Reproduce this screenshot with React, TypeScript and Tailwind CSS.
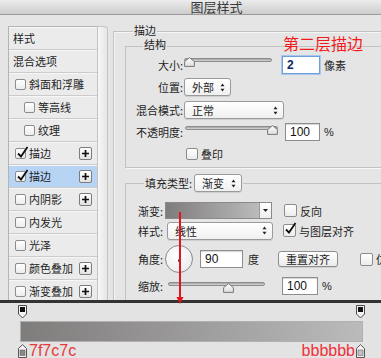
import React from 'react';

type ItemProps = {
  label: string;
  box?: boolean;
  checked?: boolean;
  indent?: boolean;
  plus?: boolean;
  active?: boolean;
};

function Check({ checked = false, className = '' }: { checked?: boolean; className?: string }) {
  return (
    <span
      className={`relative inline-block w-[11px] h-[11px] shrink-0 border border-[#8c8c8c] rounded-[2px] bg-gradient-to-b from-white to-[#ececec] ${className}`}
    >
      {checked && (
        <svg className="absolute -top-[3px] left-[0px] w-[13px] h-[13px]" viewBox="0 0 13 13" aria-hidden="true">
          <path d="M2 7.5 L5 10.5 L11.5 1" fill="none" stroke="#111" strokeWidth="1.8" />
        </svg>
      )}
    </span>
  );
}

function PlusBtn() {
  return (
    <span className="ml-auto mr-[5px] w-[13px] h-[13px] border border-[#7c7c7c] rounded-[2px] bg-gradient-to-b from-white to-[#e2e2e2] flex items-center justify-center">
      <svg viewBox="0 0 9 9" className="w-[9px] h-[9px]" aria-hidden="true">
        <path d="M4.5 1v7M1 4.5h7" stroke="#111" strokeWidth="1.7" />
      </svg>
    </span>
  );
}

function Item({ label, box, checked, indent, plus, active }: ItemProps) {
  return (
    <div
      className={`h-[23px] shrink-0 flex items-center border-b border-[#cbcbcb] shadow-[inset_0_1px_0_#f7f7f7] text-[11px] text-[#1e1e1e] ${
        active ? 'bg-[#b7d4f5]' : 'bg-[#ebebeb]'
      } ${indent ? 'pl-[15px]' : box ? 'pl-[6px]' : 'pl-[4px]'}`}
    >
      {box && <Check checked={checked} className="mr-[3px]" />}
      <span className="leading-[12px]">{label}</span>
      {plus && <PlusBtn />}
    </div>
  );
}

function Arrows() {
  return (
    <svg viewBox="0 0 5 9" className="w-[5px] h-[9px] shrink-0" aria-hidden="true">
      <path d="M2.5 0.5 L4.5 3.2 H0.5 Z M2.5 8.5 L4.5 5.8 H0.5 Z" fill="#222" />
    </svg>
  );
}

function Select({ text, className = '' }: { text: string; className?: string }) {
  return (
    <div
      className={`h-[18px] shrink-0 flex items-center justify-between pl-[7px] pr-[5px] border border-[#9a9a9a] rounded-[3px] bg-gradient-to-b from-white to-[#f0f0f0] shadow-[0_1px_0_#cfcfcf] text-[11px] leading-[12px] text-[#1e1e1e] ${className}`}
    >
      <span>{text}</span>
      <Arrows />
    </div>
  );
}

function Field({ value, className = '', focus = false }: { value: string; className?: string; focus?: boolean }) {
  return (
    <div
      className={`h-[18px] shrink-0 flex items-center pl-[4px] bg-white text-[12px] leading-[12px] font-['Liberation_Sans',sans-serif] ${
        focus
          ? 'border border-[#6f9fd8] shadow-[0_0_0_1px_#a9c8ef] text-[#102a5c] font-bold'
          : 'border border-[#8e8e8e] shadow-[inset_0_1px_1px_#d5d5d5] text-[#111]'
      } ${className}`}
    >
      {value}
    </div>
  );
}

function Thumb({ className = '' }: { className?: string }) {
  return (
    <svg viewBox="0 0 11 10" className={`absolute w-[11px] h-[10px] ${className}`} aria-hidden="true">
      <defs>
        <linearGradient id="tg" x1="0" y1="0" x2="0" y2="1">
          <stop offset="0" stopColor="#ffffff" />
          <stop offset="1" stopColor="#dcdcdc" />
        </linearGradient>
      </defs>
      <path d="M5.5 0.6 L10.4 4.6 V9.4 H0.6 V4.6 Z" fill="url(#tg)" stroke="#777" strokeWidth="1" />
    </svg>
  );
}

function Slider({ className = '', thumb = '', track = 'top-[3px]' }: { className?: string; thumb?: string; track?: string }) {
  return (
    <div className={`relative h-[18px] shrink-0 ${className}`}>
      <div className={`absolute left-0 right-0 h-[4px] rounded-full border border-[#8d8d8d] bg-gradient-to-b from-[#a2a2a2] to-[#d8d8d8] ${track}`} />
      <Thumb className={thumb} />
    </div>
  );
}

function Label({ children, className = '' }: { children: React.ReactNode; className?: string }) {
  return <span className={`shrink-0 text-right text-[11px] leading-[12px] text-[#1e1e1e] ${className}`}>{children}</span>;
}

function TopStop() {
  return (
    <svg viewBox="0 0 9 14" className="w-[9px] h-[14px]" aria-hidden="true">
      <path d="M0.5 0.5 H8.5 V9 L4.5 13 L0.5 9 Z" fill="#f4f4f4" stroke="#4a4a4a" />
      <rect x="2" y="2" width="5" height="5" fill="#111" />
    </svg>
  );
}

function BottomStop({ fill }: { fill: string }) {
  return (
    <svg viewBox="0 0 9 14" className="w-[9px] h-[14px] shrink-0" aria-hidden="true">
      <path d="M4.5 0.6 L8.5 4.5 V13.5 H0.5 V4.5 Z" fill="#f4f4f4" stroke="#555" />
      <rect x="2" y="6" width="5" height="5.5" fill={fill} stroke="#666" strokeWidth="0.6" />
    </svg>
  );
}

const items: ItemProps[] = [
  { label: '样式' },
  { label: '混合选项' },
  { label: '斜面和浮雕', box: true },
  { label: '等高线', box: true, indent: true },
  { label: '纹理', box: true, indent: true },
  { label: '描边', box: true, checked: true, plus: true },
  { label: '描边', box: true, checked: true, plus: true, active: true },
  { label: '内阴影', box: true, plus: true },
  { label: '内发光', box: true },
  { label: '光泽', box: true },
  { label: '颜色叠加', box: true, plus: true },
  { label: '渐变叠加', box: true, plus: true },
];

export default function App() {
  return (
    <div className="relative w-[381px] h-[358px] overflow-hidden bg-[#e5e5e5] font-['Noto_Sans_CJK_SC','Noto_Sans',sans-serif] text-[#1e1e1e]">
      {/* title bar */}
      <div className="h-[15px] overflow-hidden border-b border-[#9a9a9a] bg-gradient-to-b from-[#ececec] to-[#cdcdcd] flex justify-center pl-[52px]">
        <span className="text-[13px] leading-[13px] text-[#3a3a3a]">图层样式</span>
      </div>

      {/* body */}
      <div className="h-[285px] flex overflow-hidden">
        {/* style list */}
        <div className="w-[108px] shrink-0 pl-[8px] pt-[11px] flex">
          <div className="w-[89px] flex flex-col border-l border-t border-[#b4b4b4]">
            {items.map((it, i) => (
              <Item key={i} {...it} />
            ))}
          </div>
          <div className="w-[11px] rounded-tr-[4px] border-t border-r border-l border-[#c4c4c4] bg-gradient-to-r from-[#f6f6f6] to-[#e6e6e6]" />
        </div>

        {/* settings */}
        <div className="flex-1 overflow-hidden pl-[5px] pt-[16px]">
          <div className="w-[300px] h-[320px] border border-[#c2c2c2] shadow-[inset_1px_1px_0_#f5f5f5]">
            <div className="-mt-[8px] ml-[19px] w-fit px-[1px] bg-[#e5e5e5] text-[11px] leading-[12px]">描边</div>

            {/* 结构 */}
            <div className="mt-[10px] ml-[11px] w-[290px] h-[122px] border border-[#c2c2c2] shadow-[1px_1px_0_#f7f7f7]">
              <div className="-mt-[9px] ml-[17px] w-fit px-[1px] bg-[#e5e5e5] text-[11px] leading-[12px]">结构</div>

              <div className="mt-[6px] h-[18px] flex items-center">
                <Label className="w-[57px]">大小:</Label>
                <Slider className="ml-[1px] w-[88px]" track="top-[2px]" thumb="top-[1px] left-0" />
                <Field value="2" focus className="ml-[10px] w-[38px]" />
                <span className="ml-[4px] text-[11px]">像素</span>
              </div>

              <div className="mt-[4px] h-[18px] flex items-center">
                <Label className="w-[57px]">位置:</Label>
                <Select text="外部" className="ml-[1px] w-[47px]" />
              </div>

              <div className="mt-[5px] h-[18px] flex items-center">
                <Label className="w-[57px]">混合模式:</Label>
                <Select text="正常" className="ml-[1px] w-[100px]" />
              </div>

              <div className="mt-[4px] h-[18px] flex items-center">
                <Label className="w-[57px]">不透明度:</Label>
                <Slider className="ml-[2px] w-[93px]" track="top-[3px]" thumb="top-[2px] right-0" />
                <Field value="100" className="ml-[7px] w-[35px]" />
                <span className="ml-[4px] text-[11px] font-['Liberation_Sans',sans-serif]">%</span>
              </div>

              <div className="mt-[5px] h-[16px] flex items-center">
                <Check className="ml-[60px] w-[12px] h-[12px]" />
                <span className="ml-[3px] text-[11px] leading-[12px]">叠印</span>
              </div>
            </div>

            {/* 填充类型 */}
            <div className="mt-[15px] ml-[11px] w-[290px] h-[200px] border border-[#c2c2c2] shadow-[1px_1px_0_#f7f7f7]">
              <div className="-mt-[10px] ml-[18px] w-fit h-[18px] px-[1px] flex items-center gap-[2px] bg-[#e5e5e5]">
                <Label>填充类型:</Label>
                <Select text="渐变" className="w-[48px] h-[17px]" />
              </div>

              <div className="mt-[10px] h-[17px] flex items-center">
                <Label className="w-[37px]">渐变:</Label>
                <div className="ml-[2px] w-[107px] h-[17px] flex border border-[#8a8a8a] bg-white">
                  <div className="flex-1 bg-gradient-to-r from-[#7f7c7c] to-[#bbbbbb]" />
                  <div className="w-[12px] border-l border-[#9a9a9a] flex items-center justify-center bg-gradient-to-b from-white to-[#eeeeee]">
                    <svg viewBox="0 0 5 3" className="w-[5px] h-[3px]" aria-hidden="true">
                      <path d="M0 0 H5 L2.5 3 Z" fill="#222" />
                    </svg>
                  </div>
                </div>
                <Check className="ml-[12px] w-[13px] h-[13px]" />
                <span className="ml-[3px] text-[11px] leading-[12px]">反向</span>
              </div>

              <div className="mt-[3px] h-[17px] flex items-center">
                <Label className="w-[37px]">样式:</Label>
                <Select text="线性" className="ml-[4px] w-[106px] h-[17px]" />
                <Check checked className="ml-[10px] w-[13px] h-[13px]" />
                <span className="ml-[3px] text-[11px] leading-[12px]">与图层对齐</span>
              </div>

              <div className="mt-[6px] h-[28px] flex items-center">
                <Label className="w-[37px]">角度:</Label>
                <div className="ml-[2px] w-[28px] h-[28px] shrink-0 rounded-full border border-[#8a8a8a] bg-[radial-gradient(circle_at_40%_35%,#ffffff,#e6e6e6)] flex flex-col items-center">
                  <div className="mt-[2px] w-[1px] h-[11px] bg-[#333]" />
                  <div className="w-[3px] h-[3px] rounded-full bg-[#222]" />
                </div>
                <Field value="90" className="ml-[7px] w-[43px] h-[17px]" />
                <span className="ml-[5px] text-[11px] leading-[12px]">度</span>
                <div className="ml-[19px] w-[60px] h-[16px] shrink-0 flex items-center justify-center border border-[#8e8e8e] rounded-[3px] bg-gradient-to-b from-white to-[#ebebeb] shadow-[0_1px_0_#cfcfcf] text-[11px] leading-[12px]">
                  重置对齐
                </div>
                <Check className="ml-[22px] w-[13px] h-[13px]" />
                <span className="ml-[3px] text-[11px] leading-[12px] whitespace-nowrap">仿色</span>
              </div>

              <div className="mt-[4px] h-[18px] flex items-center">
                <Label className="w-[37px]">缩放:</Label>
                <Slider className="ml-[5px] w-[97px]" track="top-[5px]" thumb="top-[6px] left-[55px]" />
                <Field value="100" className="ml-[17px] w-[36px]" />
                <span className="ml-[4px] text-[11px] font-['Liberation_Sans',sans-serif]">%</span>
              </div>
            </div>
          </div>
        </div>
      </div>

      {/* divider */}
      <div className="h-[3px] bg-[#333333]" />

      {/* gradient editor */}
      <div className="h-[55px] bg-[#e3e3e3] pl-[18px] pr-[16px]">
        <div className="h-[16px] pt-[2px] flex justify-between">
          <TopStop />
          <TopStop />
        </div>
        <div className="mt-[2px] ml-[2px] mr-[2px] h-[21px] border border-[#b0b0b0] bg-gradient-to-r from-[#7f7c7c] to-[#bbbbbb]" />
        <div className="mt-[1px] h-[15px] flex items-center">
          <BottomStop fill="#8a8787" />
          <span className="ml-[2px] text-[16px] leading-[15px] text-[#e6383a] font-['Liberation_Sans',sans-serif]">7f7c7c</span>
          <span className="ml-auto text-[16px] leading-[15px] text-[#f0303a] font-['Liberation_Sans',sans-serif]">bbbbbb</span>
          <span className="ml-[1px]">
            <BottomStop fill="#c4c4c4" />
          </span>
        </div>
      </div>

      {/* annotations */}
      <span className="absolute left-[283px] top-[34px] text-[16px] leading-[18px] text-[#f21a1a] whitespace-nowrap">第二层描边</span>
      <svg className="absolute left-[176px] top-[212px] w-[8px] h-[93px]" viewBox="0 0 8 93" aria-hidden="true">
        <path d="M4 0 V87" stroke="#e3141c" strokeWidth="2" />
        <path d="M0.5 85 L7.5 85 L4 92 Z" fill="#e3141c" />
      </svg>
    </div>
  );
}
